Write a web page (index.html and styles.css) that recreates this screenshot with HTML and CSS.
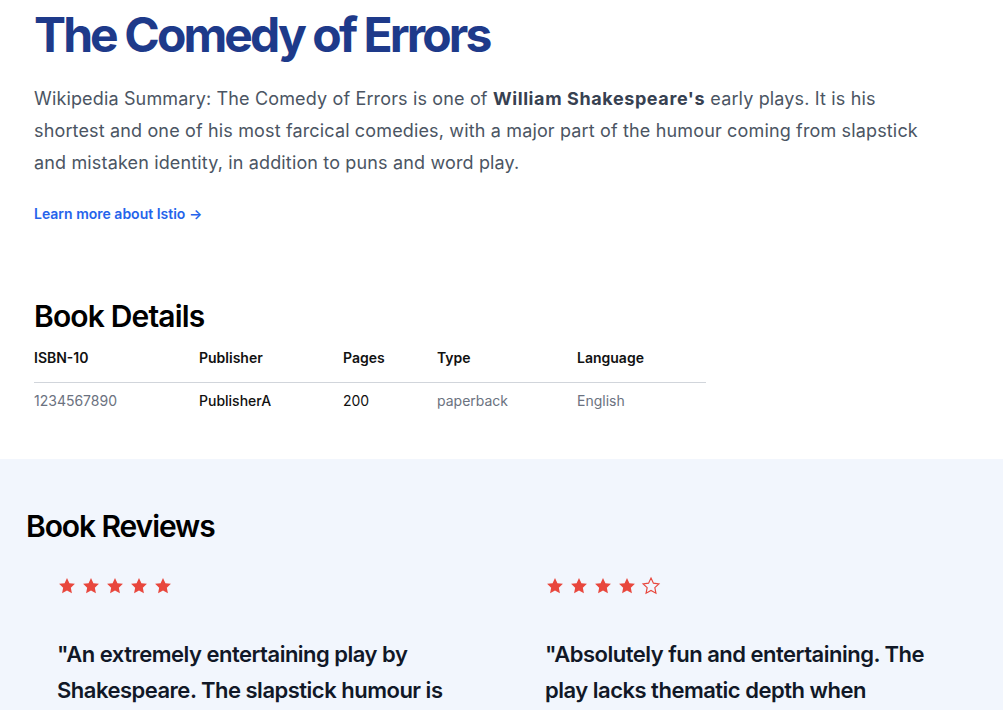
FILE: index.html
```html
<!DOCTYPE html>
<html lang="en">
<head>
<meta charset="utf-8">
<title>The Comedy of Errors</title>
<link rel="stylesheet" href="styles.css">
</head>
<body>
<section class="summary">
  <h1 class="title">The Comedy of Errors</h1>
  <p class="lead">Wikipedia Summary: The Comedy of Errors is one of <strong>William Shakespeare's</strong> early plays. It is his shortest and one of his most farcical comedies, with a major part of the humour coming from slapstick and mistaken identity, in addition to puns and word play.</p>
  <a class="learn" href="#">Learn more about Istio →</a>
</section>

<section class="details">
  <h2 class="section-title">Book Details</h2>
  <table class="details-table">
    <colgroup>
      <col class="c1"><col class="c2"><col class="c3"><col class="c4"><col class="c5">
    </colgroup>
    <thead>
      <tr><th>ISBN-10</th><th>Publisher</th><th>Pages</th><th>Type</th><th>Language</th></tr>
    </thead>
    <tbody>
      <tr><td class="muted">1234567890</td><td class="strong">PublisherA</td><td class="dark">200</td><td class="muted">paperback</td><td class="muted">English</td></tr>
    </tbody>
  </table>
</section>

<section class="reviews">
  <h2 class="section-title reviews-title">Book Reviews</h2>
  <div class="review-grid">
    <article class="review">
      <div class="stars">
        <svg class="star" viewBox="0 0 24 24"><path d="M12 2.5l2.9 6.1 6.6.8-4.9 4.6 1.3 6.6L12 17.3l-5.9 3.3 1.3-6.6-4.9-4.6 6.6-.8z"/></svg>
        <svg class="star" viewBox="0 0 24 24"><path d="M12 2.5l2.9 6.1 6.6.8-4.9 4.6 1.3 6.6L12 17.3l-5.9 3.3 1.3-6.6-4.9-4.6 6.6-.8z"/></svg>
        <svg class="star" viewBox="0 0 24 24"><path d="M12 2.5l2.9 6.1 6.6.8-4.9 4.6 1.3 6.6L12 17.3l-5.9 3.3 1.3-6.6-4.9-4.6 6.6-.8z"/></svg>
        <svg class="star" viewBox="0 0 24 24"><path d="M12 2.5l2.9 6.1 6.6.8-4.9 4.6 1.3 6.6L12 17.3l-5.9 3.3 1.3-6.6-4.9-4.6 6.6-.8z"/></svg>
        <svg class="star" viewBox="0 0 24 24"><path d="M12 2.5l2.9 6.1 6.6.8-4.9 4.6 1.3 6.6L12 17.3l-5.9 3.3 1.3-6.6-4.9-4.6 6.6-.8z"/></svg>
      </div>
      <blockquote class="quote">"An extremely entertaining play by Shakespeare. The slapstick humour is refreshing!"</blockquote>
    </article>
    <article class="review">
      <div class="stars">
        <svg class="star" viewBox="0 0 24 24"><path d="M12 2.5l2.9 6.1 6.6.8-4.9 4.6 1.3 6.6L12 17.3l-5.9 3.3 1.3-6.6-4.9-4.6 6.6-.8z"/></svg>
        <svg class="star" viewBox="0 0 24 24"><path d="M12 2.5l2.9 6.1 6.6.8-4.9 4.6 1.3 6.6L12 17.3l-5.9 3.3 1.3-6.6-4.9-4.6 6.6-.8z"/></svg>
        <svg class="star" viewBox="0 0 24 24"><path d="M12 2.5l2.9 6.1 6.6.8-4.9 4.6 1.3 6.6L12 17.3l-5.9 3.3 1.3-6.6-4.9-4.6 6.6-.8z"/></svg>
        <svg class="star" viewBox="0 0 24 24"><path d="M12 2.5l2.9 6.1 6.6.8-4.9 4.6 1.3 6.6L12 17.3l-5.9 3.3 1.3-6.6-4.9-4.6 6.6-.8z"/></svg>
        <svg class="star empty" viewBox="0 0 24 24"><path d="M12 2.5l2.9 6.1 6.6.8-4.9 4.6 1.3 6.6L12 17.3l-5.9 3.3 1.3-6.6-4.9-4.6 6.6-.8z"/></svg>
      </div>
      <blockquote class="quote">"Absolutely fun and entertaining. The play lacks thematic depth when compared to other plays by Shakespeare."</blockquote>
    </article>
  </div>
</section>
</body>
</html>
```

FILE: styles.css
```css
* { box-sizing: border-box; }

html, body {
  margin: 0;
  padding: 0;
  background: #ffffff;
}

body {
  font-family: Inter, "Noto Sans", "Liberation Sans", sans-serif;
  color: #000000;
}

.summary {
  padding: 11px 34px 0 34px;
  max-width: 980px;
}

.title {
  margin: 0;
  font-size: 48px;
  line-height: 48px;
  font-weight: 700;
  letter-spacing: -2.9px;
  color: #1e3a8a;
}

.lead {
  margin: 24px 0 0 0;
  font-size: 18px;
  line-height: 32px;
  letter-spacing: 0.15px;
  color: #4b5563;
}

.lead strong {
  font-weight: 700;
  color: #374151;
  letter-spacing: 0.6px;
}

.learn {
  display: inline-block;
  margin-top: 25px;
  font-size: 14px;
  line-height: 20px;
  font-weight: 600;
  color: #2563eb;
  text-decoration: none;
}

.details {
  padding: 74px 34px 40px 34px;
}

.section-title {
  margin: 0;
  font-size: 30px;
  line-height: 36px;
  font-weight: 600;
  letter-spacing: -0.85px;
  color: #000000;
}

.details-table {
  margin-top: 4px;
  border-collapse: collapse;
  table-layout: fixed;
  width: 672px;
  font-size: 14px;
  line-height: 20px;
}

.c1 { width: 165px; }
.c2 { width: 144px; }
.c3 { width: 94px; }
.c4 { width: 140px; }
.c5 { width: 129px; }

.details-table th {
  text-align: left;
  font-weight: 600;
  padding: 10px 0 14px 0;
  border-bottom: 1px solid #d1d5db;
  color: #111111;
}

.details-table td {
  padding: 8px 0 8px 0;
  text-align: left;
}

.muted { color: #6b7280; }
.strong { color: #111111; font-weight: 500; }
.dark { color: #111111; }

.reviews {
  background: #f2f6fd;
  padding: 49px 26px 40px 26px;
  min-height: 260px;
}

.reviews-title {
  line-height: 36px;
  letter-spacing: -1.1px;
}

.review-grid {
  display: grid;
  grid-template-columns: 1fr 1fr;
  column-gap: 25px;
  margin-top: 32px;
}

.review {
  padding: 0 31px;
}

.stars {
  display: flex;
  gap: 4px;
  height: 20px;
  align-items: center;
}

.star {
  width: 20px;
  height: 20px;
  fill: #e8473d;
}

.star.empty {
  fill: none;
  stroke: #e8473d;
  stroke-width: 1.4;
}

.quote {
  margin: 40px 0 0 0;
  font-size: 22px;
  line-height: 36px;
  font-weight: 600;
  letter-spacing: -0.5px;
  color: #111827;
}
```
